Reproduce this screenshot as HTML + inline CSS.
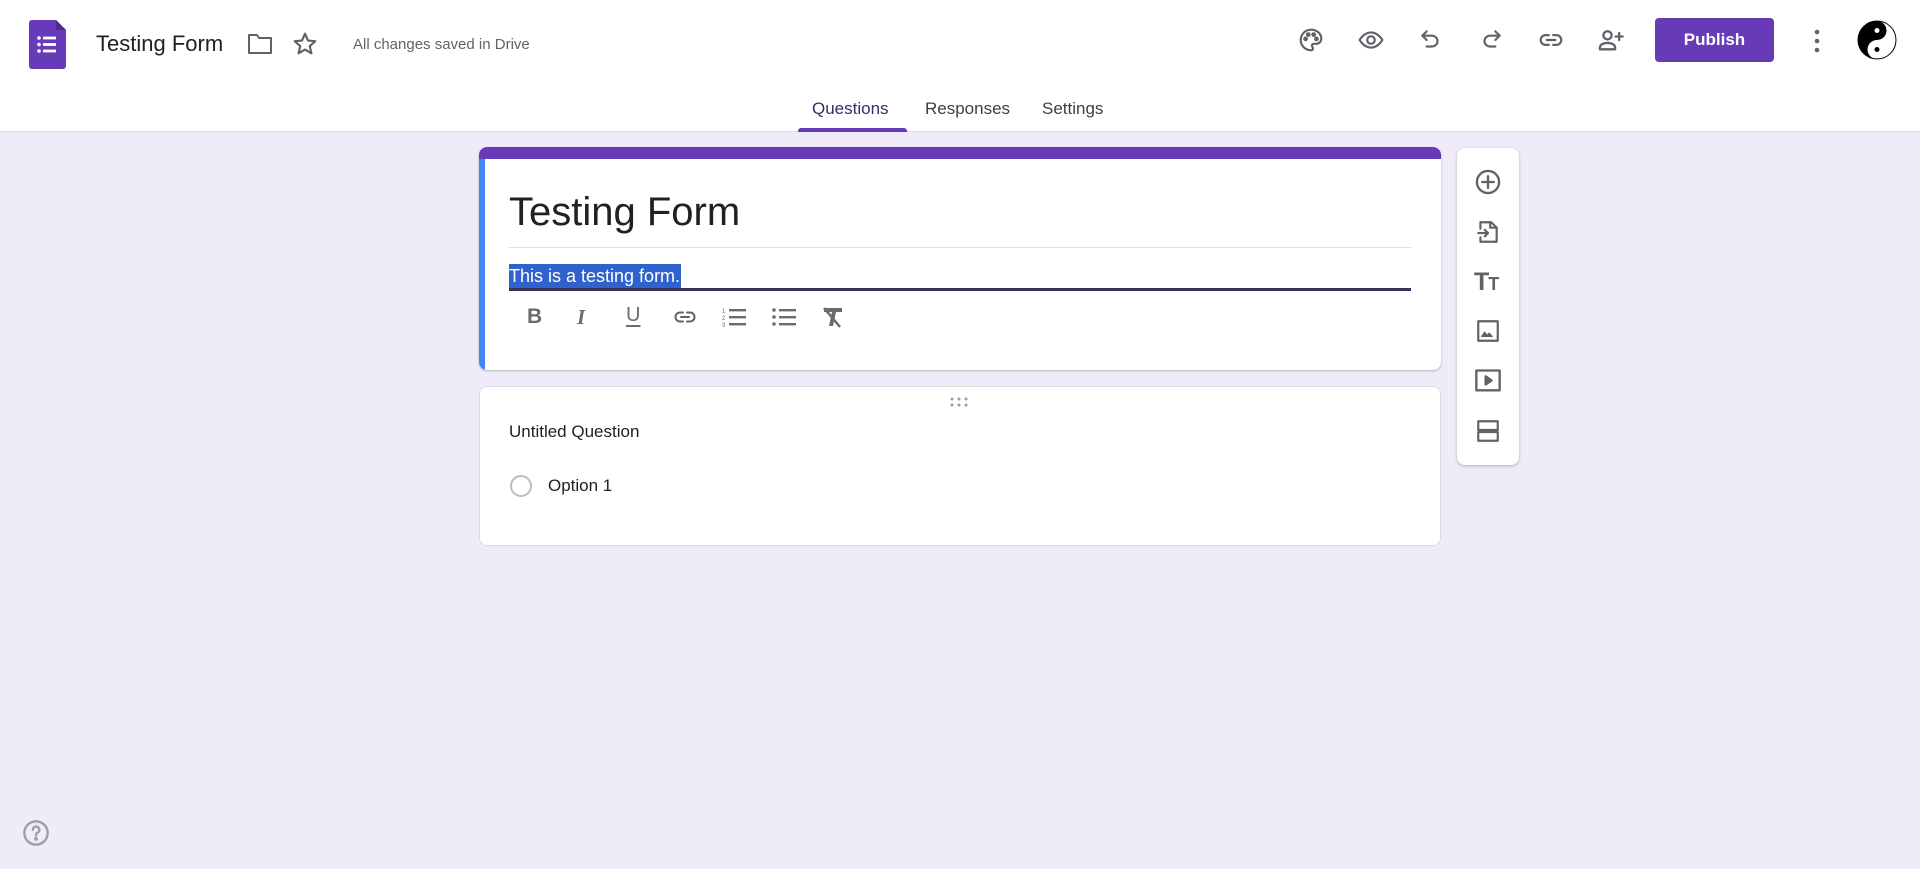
<!DOCTYPE html>
<html><head><meta charset="utf-8"><style>
*{margin:0;padding:0;box-sizing:border-box}
body{width:1920px;height:869px;background:#f0ebf8;font-family:"Liberation Sans",sans-serif;position:relative;overflow:hidden;color:#202124}
.a{position:absolute}
svg.i{position:absolute;fill:none;stroke:#5f6368;stroke-width:2;stroke-linecap:round;stroke-linejoin:round}
#hdr{position:absolute;left:0;top:0;width:1920px;height:132px;background:#fff;border-bottom:1px solid #dadce0}
.tab{position:absolute;top:99px;font-size:17px;color:#3c4043}
.card{position:absolute;left:479px;width:962px;background:#fff;border-radius:8px;border:1px solid #dadce0}
</style></head><body>
<div id="hdr">
 <svg class="a" style="left:29px;top:20px" width="37" height="49" viewBox="0 0 37 49"><path d="M3 0h24l10 10v36a3 3 0 0 1-3 3H3a3 3 0 0 1-3-3V3a3 3 0 0 1 3-3z" fill="#673ab7"/><path d="M27 0l10 10H27z" fill="#4b2a8a"/><g fill="#fff"><circle cx="10" cy="18" r="1.8"/><circle cx="10" cy="24.5" r="1.8"/><circle cx="10" cy="31" r="1.8"/><rect x="14" y="16.6" width="13" height="2.8"/><rect x="14" y="23.1" width="13" height="2.8"/><rect x="14" y="29.6" width="13" height="2.8"/></g></svg>
 <div class="a" style="left:96px;top:31px;font-size:22px;color:#202124">Testing Form</div>
 <svg class="i" style="left:247px;top:32px" width="26" height="24" viewBox="0 0 26 24"><path d="M2 3h8l2 3h12v15H2z"/></svg>
 <svg class="i" style="left:292px;top:31px" width="26" height="26" viewBox="0 0 24 24"><path d="M12 2.5l2.8 6.3 6.7.6-5.1 4.5 1.5 6.7L12 17.1l-5.9 3.5 1.5-6.7L2.5 9.4l6.7-.6z"/></svg>
 <div class="a" style="left:353px;top:36px;font-size:15px;color:#5f6368">All changes saved in Drive</div>
 <svg class="i" style="left:1298px;top:27px" width="26" height="26" viewBox="0 0 24 24"><path d="M12 2.5a9.5 9.5 0 0 0 0 19c1.2 0 1.8-.8 1.8-1.7 0-1.3-1-1.5-1-2.6 0-1 .8-1.7 1.8-1.7h2.2a4.7 4.7 0 0 0 4.7-4.7C21.5 6 17.2 2.5 12 2.5z"/><circle cx="7" cy="11" r="1.2" fill="#5f6368"/><circle cx="9.5" cy="7" r="1.2" fill="#5f6368"/><circle cx="14.5" cy="7" r="1.2" fill="#5f6368"/><circle cx="17" cy="11" r="1.2" fill="#5f6368"/></svg>
 <svg class="i" style="left:1357px;top:27px" width="28" height="26" viewBox="0 0 24 24"><path d="M1.5 12S5.5 5 12 5s10.5 7 10.5 7-4 7-10.5 7S1.5 12 1.5 12z"/><circle cx="12" cy="12" r="3.5"/></svg>
 <svg class="i" style="left:1418px;top:27px" width="26" height="26" viewBox="0 0 24 24"><path d="M8 4L4 8l4 4"/><path d="M4 8h9a5 5 0 0 1 0 10H8"/></svg>
 <svg class="i" style="left:1478px;top:27px" width="26" height="26" viewBox="0 0 24 24"><path d="M16 4l4 4-4 4"/><path d="M20 8h-9a5 5 0 0 0 0 10h5"/></svg>
 <svg class="i" style="left:1538px;top:27px" width="26" height="26" viewBox="0 0 24 24"><path d="M10 7.5H7a4.5 4.5 0 0 0 0 9h3M14 7.5h3a4.5 4.5 0 0 1 0 9h-3M8 12h8"/></svg>
 <svg class="i" style="left:1597px;top:26px" width="28" height="28" viewBox="0 0 24 24"><circle cx="9" cy="8" r="3.5"/><path d="M2.5 20v-1.5c0-2.5 3-4 6.5-4s6.5 1.5 6.5 4V20zM19 6v6M16 9h6"/></svg>
 <div class="a" style="left:1655px;top:18px;width:119px;height:44px;background:#673ab7;border-radius:4px;color:#fff;font-size:17px;font-weight:bold;text-align:center;line-height:44px">Publish</div>
 <svg class="a" style="left:1812px;top:28px" width="10" height="26"><circle cx="5" cy="4" r="2.3" fill="#5f6368"/><circle cx="5" cy="13" r="2.3" fill="#5f6368"/><circle cx="5" cy="22" r="2.3" fill="#5f6368"/></svg>
 <svg class="a" style="left:1857px;top:20px" width="40" height="40" viewBox="0 0 40 40"><circle cx="20" cy="20" r="19" fill="#fff" stroke="#000" stroke-width="1"/><path d="M20 1a19 19 0 0 0 0 38 9.5 9.5 0 0 1 0-19 9.5 9.5 0 0 0 0-19z" fill="#000"/><circle cx="20" cy="10.5" r="2.5" fill="#fff"/><circle cx="20" cy="29.5" r="2.5" fill="#000"/></svg>
 <div class="tab" style="left:812px;color:#3c2a63">Questions</div>
 <div class="tab" style="left:925px">Responses</div>
 <div class="tab" style="left:1042px">Settings</div>
 <div class="a" style="left:798px;top:128px;width:109px;height:4px;background:#673ab7;border-radius:3px 3px 0 0"></div>
</div>

<div class="card" style="top:147px;height:223px;overflow:hidden;border:none;box-shadow:0 1px 2px rgba(0,0,0,.25)">
 <div class="a" style="left:0;top:0;width:962px;height:12px;background:#673ab7"></div>
 <div class="a" style="left:0;top:12px;width:6px;height:211px;background:#4285f4"></div>
 <div class="a" style="left:30px;top:43px;font-size:40px;color:#202124">Testing Form</div>
 <div class="a" style="left:30px;top:100px;width:902px;height:1px;background:#e0e0e0"></div>
 <div class="a" style="left:30px;top:117px;height:25px;background:#2f62cc;color:#fff;font-size:18px;line-height:25px;padding-right:1px">This is a testing form.</div>
 <div class="a" style="left:30px;top:141px;width:902px;height:3px;background:#3c2f5c"></div>
 <div class="a" style="left:48px;top:158px;font-size:21px;font-weight:bold;color:#6b6b6b">B</div>
 <div class="a" style="left:98px;top:158px;font-size:21px;font-weight:bold;font-style:italic;color:#6b6b6b;font-family:'Liberation Serif',serif">I</div>
 <div class="a" style="left:147px;top:157px;font-size:20px;color:#6b6b6b;text-decoration:underline;text-underline-offset:4px">U</div>
 <svg class="i" style="left:192px;top:158px" width="28" height="24" viewBox="0 0 24 24"><path d="M10 7.5H7a4.5 4.5 0 0 0 0 9h3M14 7.5h3a4.5 4.5 0 0 1 0 9h-3M8 12h8"/></svg>
 <svg class="a" style="left:242px;top:158px" width="26" height="24" viewBox="0 0 26 24"><g fill="#6b6b6b"><rect x="8" y="4" width="17" height="2.4"/><rect x="8" y="11" width="17" height="2.4"/><rect x="8" y="18" width="17" height="2.4"/></g><text x="1" y="8" font-size="6" fill="#6b6b6b">1</text><text x="1" y="15" font-size="6" fill="#6b6b6b">2</text><text x="1" y="22" font-size="6" fill="#6b6b6b">3</text></svg>
 <svg class="a" style="left:292px;top:158px" width="26" height="24" viewBox="0 0 26 24"><g fill="#6b6b6b"><circle cx="3" cy="5" r="1.8"/><circle cx="3" cy="12" r="1.8"/><circle cx="3" cy="19" r="1.8"/><rect x="8" y="4" width="17" height="2.4"/><rect x="8" y="11" width="17" height="2.4"/><rect x="8" y="18" width="17" height="2.4"/></g></svg>
 <svg class="a" style="left:341px;top:158px" width="26" height="24" viewBox="0 0 26 24"><path d="M4 3h18v4h-6l-3 14h-4l3-14H4z" fill="#6b6b6b"/><path d="M4 3l16 19" stroke="#6b6b6b" stroke-width="2.5"/></svg>
</div>

<div class="card" style="top:386px;height:160px">
 <svg class="a" style="left:469px;top:9px" width="22" height="12"><g fill="#9aa0a6"><circle cx="3" cy="3" r="1.5"/><circle cx="10" cy="3" r="1.5"/><circle cx="17" cy="3" r="1.5"/><circle cx="3" cy="9" r="1.5"/><circle cx="10" cy="9" r="1.5"/><circle cx="17" cy="9" r="1.5"/></g></svg>
 <div class="a" style="left:29px;top:35px;font-size:17px;color:#202124">Untitled Question</div>
 <div class="a" style="left:30px;top:88px;width:22px;height:22px;border:2px solid #bdbdbd;border-radius:50%"></div>
 <div class="a" style="left:68px;top:89px;font-size:17px;color:#202124">Option 1</div>
</div>

<div class="a" style="left:1457px;top:148px;width:62px;height:317px;background:#fff;border-radius:8px;box-shadow:0 1px 3px rgba(0,0,0,.25)">
 <svg class="i" style="left:17px;top:20px" width="28" height="28" viewBox="0 0 24 24"><circle cx="12" cy="12" r="9.5"/><path d="M12 7v10M7 12h10"/></svg>
 <svg class="i" style="left:18px;top:70px" width="26" height="28" viewBox="0 0 24 24"><path d="M5 9V3h10l5 5v13H5v-4"/><path d="M14 3v5h6M3 13h9M9 10l3 3-3 3"/></svg>
 <div class="a" style="left:17px;top:120px;font-size:25px;font-weight:bold;color:#5f6368;letter-spacing:-1px">T<span style="font-size:18px">T</span></div>
 <svg class="i" style="left:18px;top:170px" width="26" height="26" viewBox="0 0 24 24"><rect x="3" y="3" width="18" height="18"/><path d="M6 17l3-4 2 3 2-2 3 3z" fill="#5f6368" stroke-width="1"/></svg>
 <svg class="i" style="left:17px;top:220px" width="28" height="26" viewBox="0 0 24 22"><rect x="2" y="2" width="20" height="17"/><path d="M10 7v7l5-3.5z" fill="#5f6368"/></svg>
 <svg class="i" style="left:18px;top:270px" width="26" height="26" viewBox="0 0 24 24"><rect x="3" y="3" width="18" height="8"/><rect x="3" y="13" width="18" height="8"/></svg>
</div>

<svg class="i" style="left:22px;top:819px;stroke:#9aa0a6" width="28" height="28" viewBox="0 0 24 24"><circle cx="12" cy="12" r="10"/><path d="M9.3 9.3a2.8 2.8 0 1 1 3.8 2.6c-.8.4-1.1.9-1.1 1.8v.6"/><circle cx="12" cy="17" r=".6" fill="#9aa0a6"/></svg>
</body></html>
